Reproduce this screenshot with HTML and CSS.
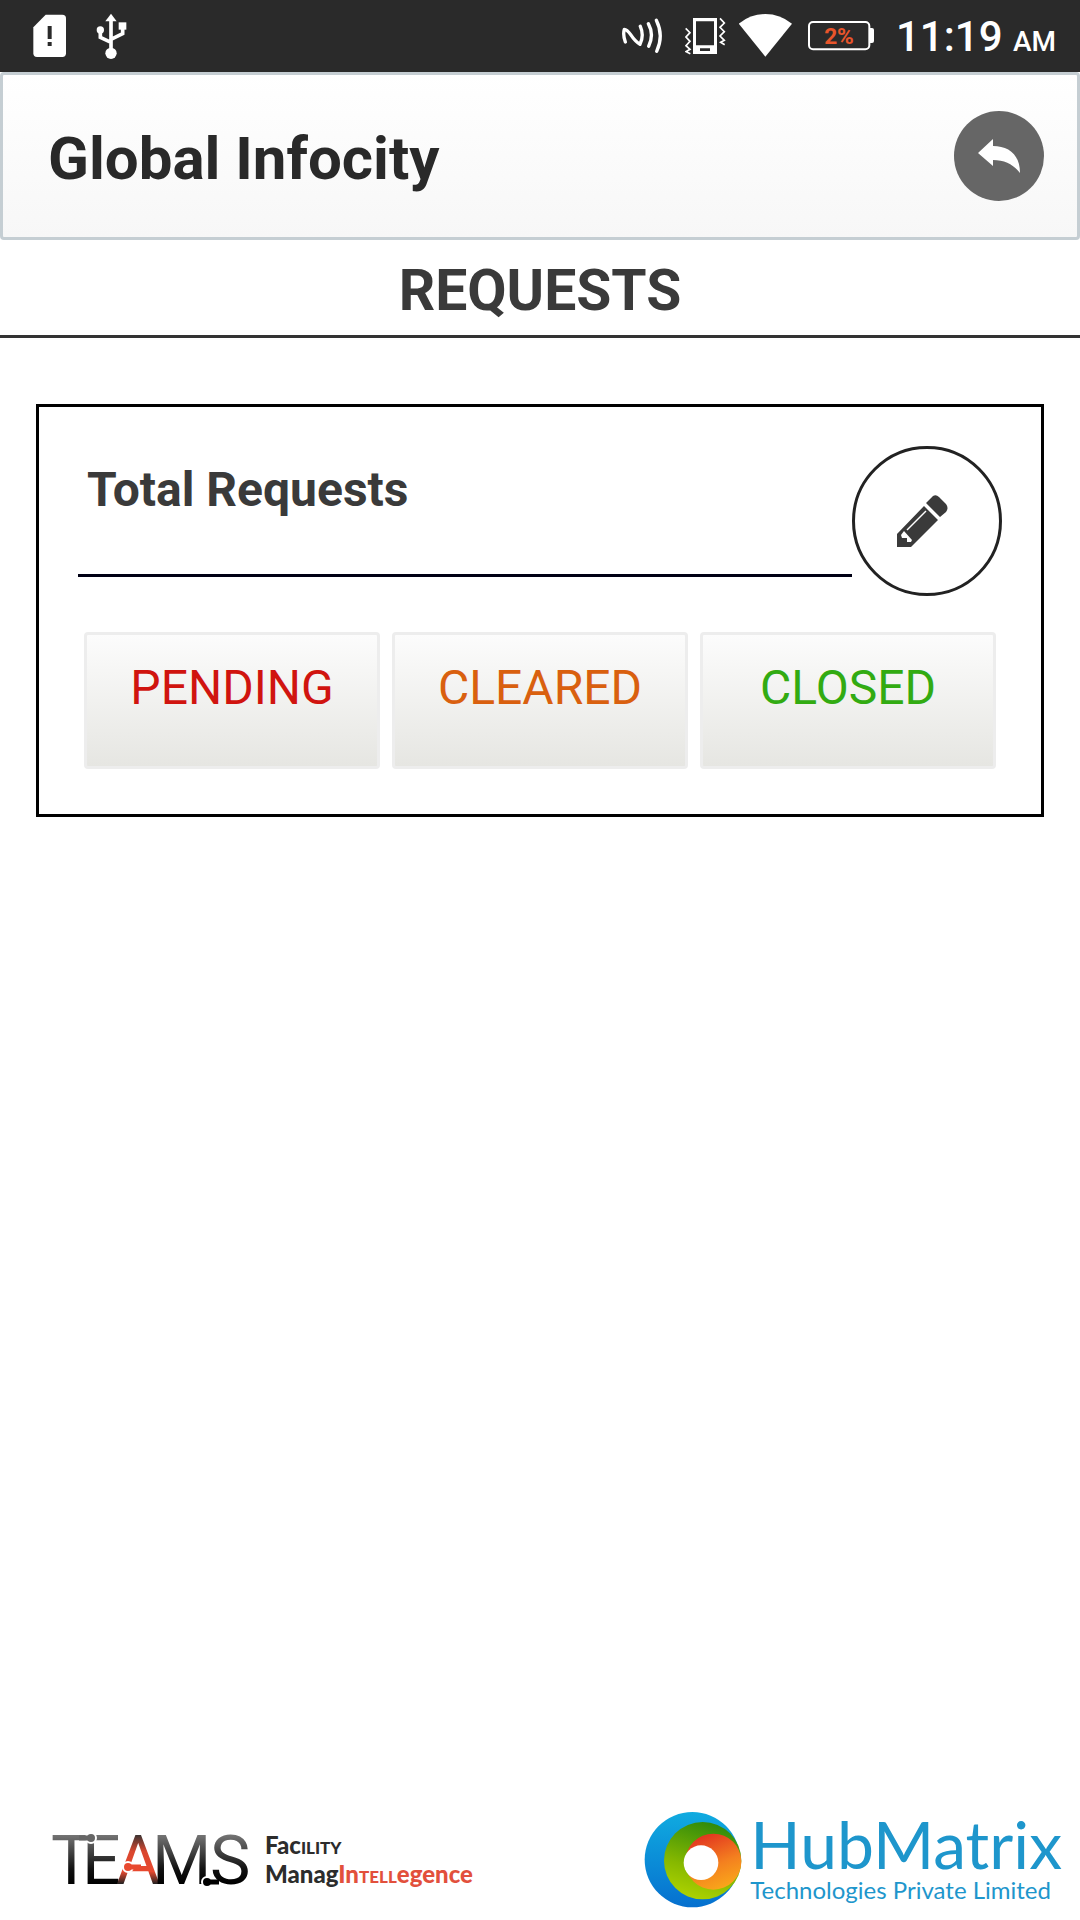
FILE: index.html
```
<!DOCTYPE html>
<html lang="en">
<head>
  <meta charset="UTF-8">
  <meta name="viewport" content="width=device-width, initial-scale=1.0">
  <title>Requests - Global Infocity</title>
  <link rel="stylesheet" href="styles.css">
</head>
<body>

<div class="status-bar">
  <div class="status-left">
    <svg class="icon-sim" viewBox="100 0 99 216">
      <path fill="#fff" d="M138 44H188Q199 44 199 55V160Q199 171 188 171H112Q101 171 101 160V82Z"/>
      <path fill="#2a2a2a" d="M144 78h12v39h-12zM144 126h12v12h-12z"/>
    </svg>
    <svg class="icon-usb" viewBox="288 0 93 216">
      <g fill="none" stroke="#fff" stroke-width="11">
        <path d="M333 58V150M301 92V112L333 127M368 86V101L333 118"/>
      </g>
      <g fill="#fff">
        <path d="M333 41L350 64H316Z"/>
        <circle cx="333" cy="160" r="17"/>
        <circle cx="301" cy="90" r="11"/>
        <path d="M356 67h23v22h-23z"/>
      </g>
    </svg>
  </div>
  <div class="status-right">
    <svg class="icon-nfc" viewBox="66 0 153 216">
      <g fill="none" stroke="#fff" stroke-width="10" stroke-linecap="round" stroke-linejoin="round">
        <path d="M76 126Q68 104 73 88Q81 88 92 104Q106 125 120 133Q133 106 121 79"/>
        <path d="M145 71Q163 104 146 139M169 61Q192 107 170 154"/>
      </g>
    </svg>
    <svg class="icon-vibrate" viewBox="255 0 126 216">
      <path fill="#fff" fill-rule="evenodd" d="M279 54h72v108h-72zM288 64v72h54v-72zM300 145v8h30v-8z"/>
      <path fill="none" stroke="#fff" stroke-width="5" d="M257 85L270 98L258 111L270 124L258 137L270 148L258 155L271 161M360 55L373 69L360 82L373 95L360 108L373 121L362 127L374 134"/>
    </svg>
    <svg class="icon-wifi" viewBox="417 0 171 216">
      <path fill="#fff" d="M496 170L416 71Q452 42 496 42Q540 42 576 71Z"/>
    </svg>
    <svg class="icon-battery" viewBox="624 0 228 216">
      <rect x="627" y="66" width="181" height="82" rx="12" fill="none" stroke="#fff" stroke-width="6"/>
      <path fill="#fff" d="M808 84h8q6 0 6 6v33q0 6-6 6h-8z"/>
      <text class="battery-text" x="717" y="132" text-anchor="middle">2%</text>
    </svg>
    <div class="clock">11:19 <span class="ampm">AM</span></div>
  </div>
</div>

<header class="top-bar">
  <h1>Global Infocity</h1>
  <button class="back-btn" aria-label="Back">
    <svg viewBox="0 0 90 90">
      <path fill="#fff" d="M24 42L39 28V35C54 35 66 43 66 62C60 54 51 49 39 49V55Z"/>
    </svg>
  </button>
</header>

<h2 class="page-title">REQUESTS</h2>

<main class="content">
  <section class="card">
    <div class="card-head">
      <h3>Total Requests</h3>
      <button class="edit-btn" aria-label="New request">
        <svg viewBox="5 0 54 54">
          <path fill="#3a3a3a" d="M2 40L29 12L43 26L16 53H2ZM31 9L38 2Q41 0 44 3L51 10Q54 14 51 18L45 23Z"/>
          <path fill="#fff" d="M6 41L9 37L17 46L16 48H12V44H7Z"/>
          <path stroke="#fff" stroke-width="1.5" d="M12 36L31 17"/>
        </svg>
      </button>
    </div>
    <div class="status-buttons">
      <button class="pending">PENDING</button>
      <button class="cleared">CLEARED</button>
      <button class="closed">CLOSED</button>
    </div>
  </section>
</main>

<footer class="footer">
  <div class="teams">
    <svg class="teams-logo" viewBox="0 0 198 96">
      <defs>
        <linearGradient id="dark" gradientUnits="userSpaceOnUse" x1="0" y1="22" x2="0" y2="72">
          <stop offset="0" stop-color="#777"/>
          <stop offset="0.7" stop-color="#111"/>
          <stop offset="1" stop-color="#000"/>
        </linearGradient>
        <linearGradient id="red" gradientUnits="userSpaceOnUse" x1="0" y1="22" x2="0" y2="72">
          <stop offset="0" stop-color="#333"/>
          <stop offset="0.35" stop-color="#d9472f"/>
          <stop offset="0.75" stop-color="#e8492f"/>
          <stop offset="1" stop-color="#222"/>
        </linearGradient>
      </defs>
      <text class="teams-text" y="72" fill="url(#dark)">
        <tspan x="0">T</tspan><tspan x="31">E</tspan><tspan x="65" fill="url(#red)">A</tspan><tspan x="101">M</tspan><tspan x="159">S</tspan>
      </text>
      <g stroke="#fff" stroke-width="2">
        <circle cx="40" cy="26" r="5" fill="#666"/>
        <circle cx="77" cy="55" r="5" fill="#e8492f"/>
        <circle cx="156" cy="70" r="5" fill="#000"/>
      </g>
      <path stroke="#666" stroke-width="5" d="M28 26H38"/>
      <path stroke="#e8492f" stroke-width="5" d="M78 55H90"/>
      <path stroke="#000" stroke-width="5" d="M157 70H168"/>
    </svg>
    <div class="teams-tag">
      <div>Fac<span class="caps">ility</span></div>
      <div>Manag<span class="accent">In<span class="caps">tell</span>egence</span></div>
    </div>
  </div>
  <div class="hub">
    <svg class="hub-logo" viewBox="77 65 294 288">
      <defs>
        <linearGradient id="blue" x1="0" y1="0" x2="0" y2="1">
          <stop offset="0" stop-color="#10abe0"/>
          <stop offset="1" stop-color="#0670cf"/>
        </linearGradient>
        <linearGradient id="green" x1="0.6" y1="0" x2="0.3" y2="1">
          <stop offset="0" stop-color="#2f8a0c"/>
          <stop offset="0.6" stop-color="#86b800"/>
          <stop offset="1" stop-color="#b0d400"/>
        </linearGradient>
        <linearGradient id="orange" x1="0.2" y1="0" x2="0.6" y2="1">
          <stop offset="0" stop-color="#e02c20"/>
          <stop offset="0.6" stop-color="#f4801f"/>
          <stop offset="1" stop-color="#f9a61a"/>
        </linearGradient>
      </defs>
      <circle cx="222" cy="208" r="143" fill="url(#blue)"/>
      <circle cx="253" cy="211" r="116" fill="url(#green)"/>
      <circle cx="285" cy="214" r="84" fill="url(#orange)"/>
      <circle cx="248" cy="217" r="52" fill="#fff"/>
    </svg>
    <div class="hub-text">
      <div class="hub-name">HubMatrix</div>
      <div class="hub-sub">Technologies Private Limited</div>
    </div>
  </div>
</footer>

</body>
</html>
```

FILE: styles.css
```
* {
  margin: 0;
  padding: 0;
  box-sizing: border-box;
  font-family: Roboto, "Open Sans", sans-serif;
}

body {
  min-height: 100vh;
  display: flex;
  flex-direction: column;
  background-color: #fff;
  color: #3a3a3a;
}

svg {
  display: block;
  flex-shrink: 0;
}

button {
  cursor: pointer;
}

/* status bar */
.status-bar {
  height: 72px;
  padding: 0 24px 0 33px;
  display: flex;
  justify-content: space-between;
  background-color: #2a2a2a;
  color: #fff;
}

.status-left,
.status-right {
  display: flex;
  align-items: center;
}

.status-left { gap: 30px; }
.status-right { gap: 12px; }

.status-bar svg { height: 72px; }
.icon-sim { width: 33px; }
.icon-usb { width: 31px; }
.icon-nfc { width: 51px; }
.icon-vibrate { width: 42px; }
.icon-wifi { width: 57px; }
.icon-battery { width: 76px; }

.battery-text {
  font-size: 68px;
  font-weight: 700;
  fill: #e8552b;
}

.clock {
  padding-top: 6px;
  font-size: 42px;
  font-weight: 500;
  line-height: 66px;
}

.ampm {
  font-size: 28px;
}

/* header */
.top-bar {
  padding: 36px 33px 36px 45px;
  display: flex;
  justify-content: space-between;
  align-items: center;
  border: 3px solid #c5ced3;
  border-radius: 4px;
  background: linear-gradient(to bottom, #fff, #f7f7f7);
}

.top-bar h1 {
  padding-top: 6px;
  font-size: 60px;
  line-height: 70px;
  color: #292929;
}

.back-btn {
  width: 90px;
  height: 90px;
  border: none;
  border-radius: 50%;
  background-color: #666;
}

.page-title {
  padding: 18px 0 11px;
  font-size: 57px;
  line-height: 66px;
  text-align: center;
  border-bottom: 3px solid #333;
}

/* requests card */
.content {
  flex: 1;
  padding: 66px 36px;
}

.card {
  padding: 39px 39px 45px;
  border: 3px solid #000;
}

.card-head {
  display: flex;
  align-items: flex-start;
}

.card-head h3 {
  flex: 1;
  padding: 16px 9px 56px;
  font-size: 48px;
  line-height: 56px;
  border-bottom: 3px solid #000014;
}

.edit-btn {
  width: 150px;
  height: 150px;
  border: 3px solid #222;
  border-radius: 50%;
  background-color: #fff;
}

.edit-btn svg {
  width: 54px;
  height: 54px;
  margin: 0 auto;
  overflow: visible;
}

.status-buttons {
  margin-top: 36px;
  padding: 0 6px;
  display: grid;
  grid-template-columns: repeat(3, 1fr);
  gap: 12px;
}

.status-buttons button {
  padding: 25px 0 50px;
  font-size: 48px;
  line-height: 56px;
  border: 3px solid #ededed;
  border-radius: 4px;
  background: linear-gradient(to bottom, #fcfcfc, #e6e6e2);
}

.status-buttons .pending { color: #d0140f; }
.status-buttons .cleared { color: #d9600f; }
.status-buttons .closed { color: #32ab12; }

/* footer logos */
.footer {
  padding: 0 18px 12px 51px;
  display: flex;
  justify-content: space-between;
  align-items: flex-start;
}

.teams {
  display: flex;
  align-items: flex-start;
  gap: 16px;
}

.teams-logo {
  width: 198px;
  height: 96px;
}

.teams-text {
  font-family: "Open Sans", sans-serif;
  font-size: 68px;
}

.teams-tag {
  padding-top: 18px;
}

.teams-tag div {
  font-family: Lato, sans-serif;
  font-size: 24px;
  font-weight: 900;
  line-height: 29px;
  color: #2c2c2c;
}

.teams-tag span { font-family: inherit; }
.teams-tag .caps { font-variant: small-caps; }
.teams-tag .accent { color: #e2503c; }

.hub {
  display: flex;
  align-items: flex-start;
  gap: 8px;
}

.hub-logo {
  width: 98px;
  height: 96px;
}

.hub-text div {
  font-family: Lato, sans-serif;
  color: #1e96cc;
}

.hub-text .hub-name {
  font-size: 66px;
  line-height: 64px;
}

.hub-text .hub-sub {
  font-size: 24px;
  line-height: 28px;
}
```
